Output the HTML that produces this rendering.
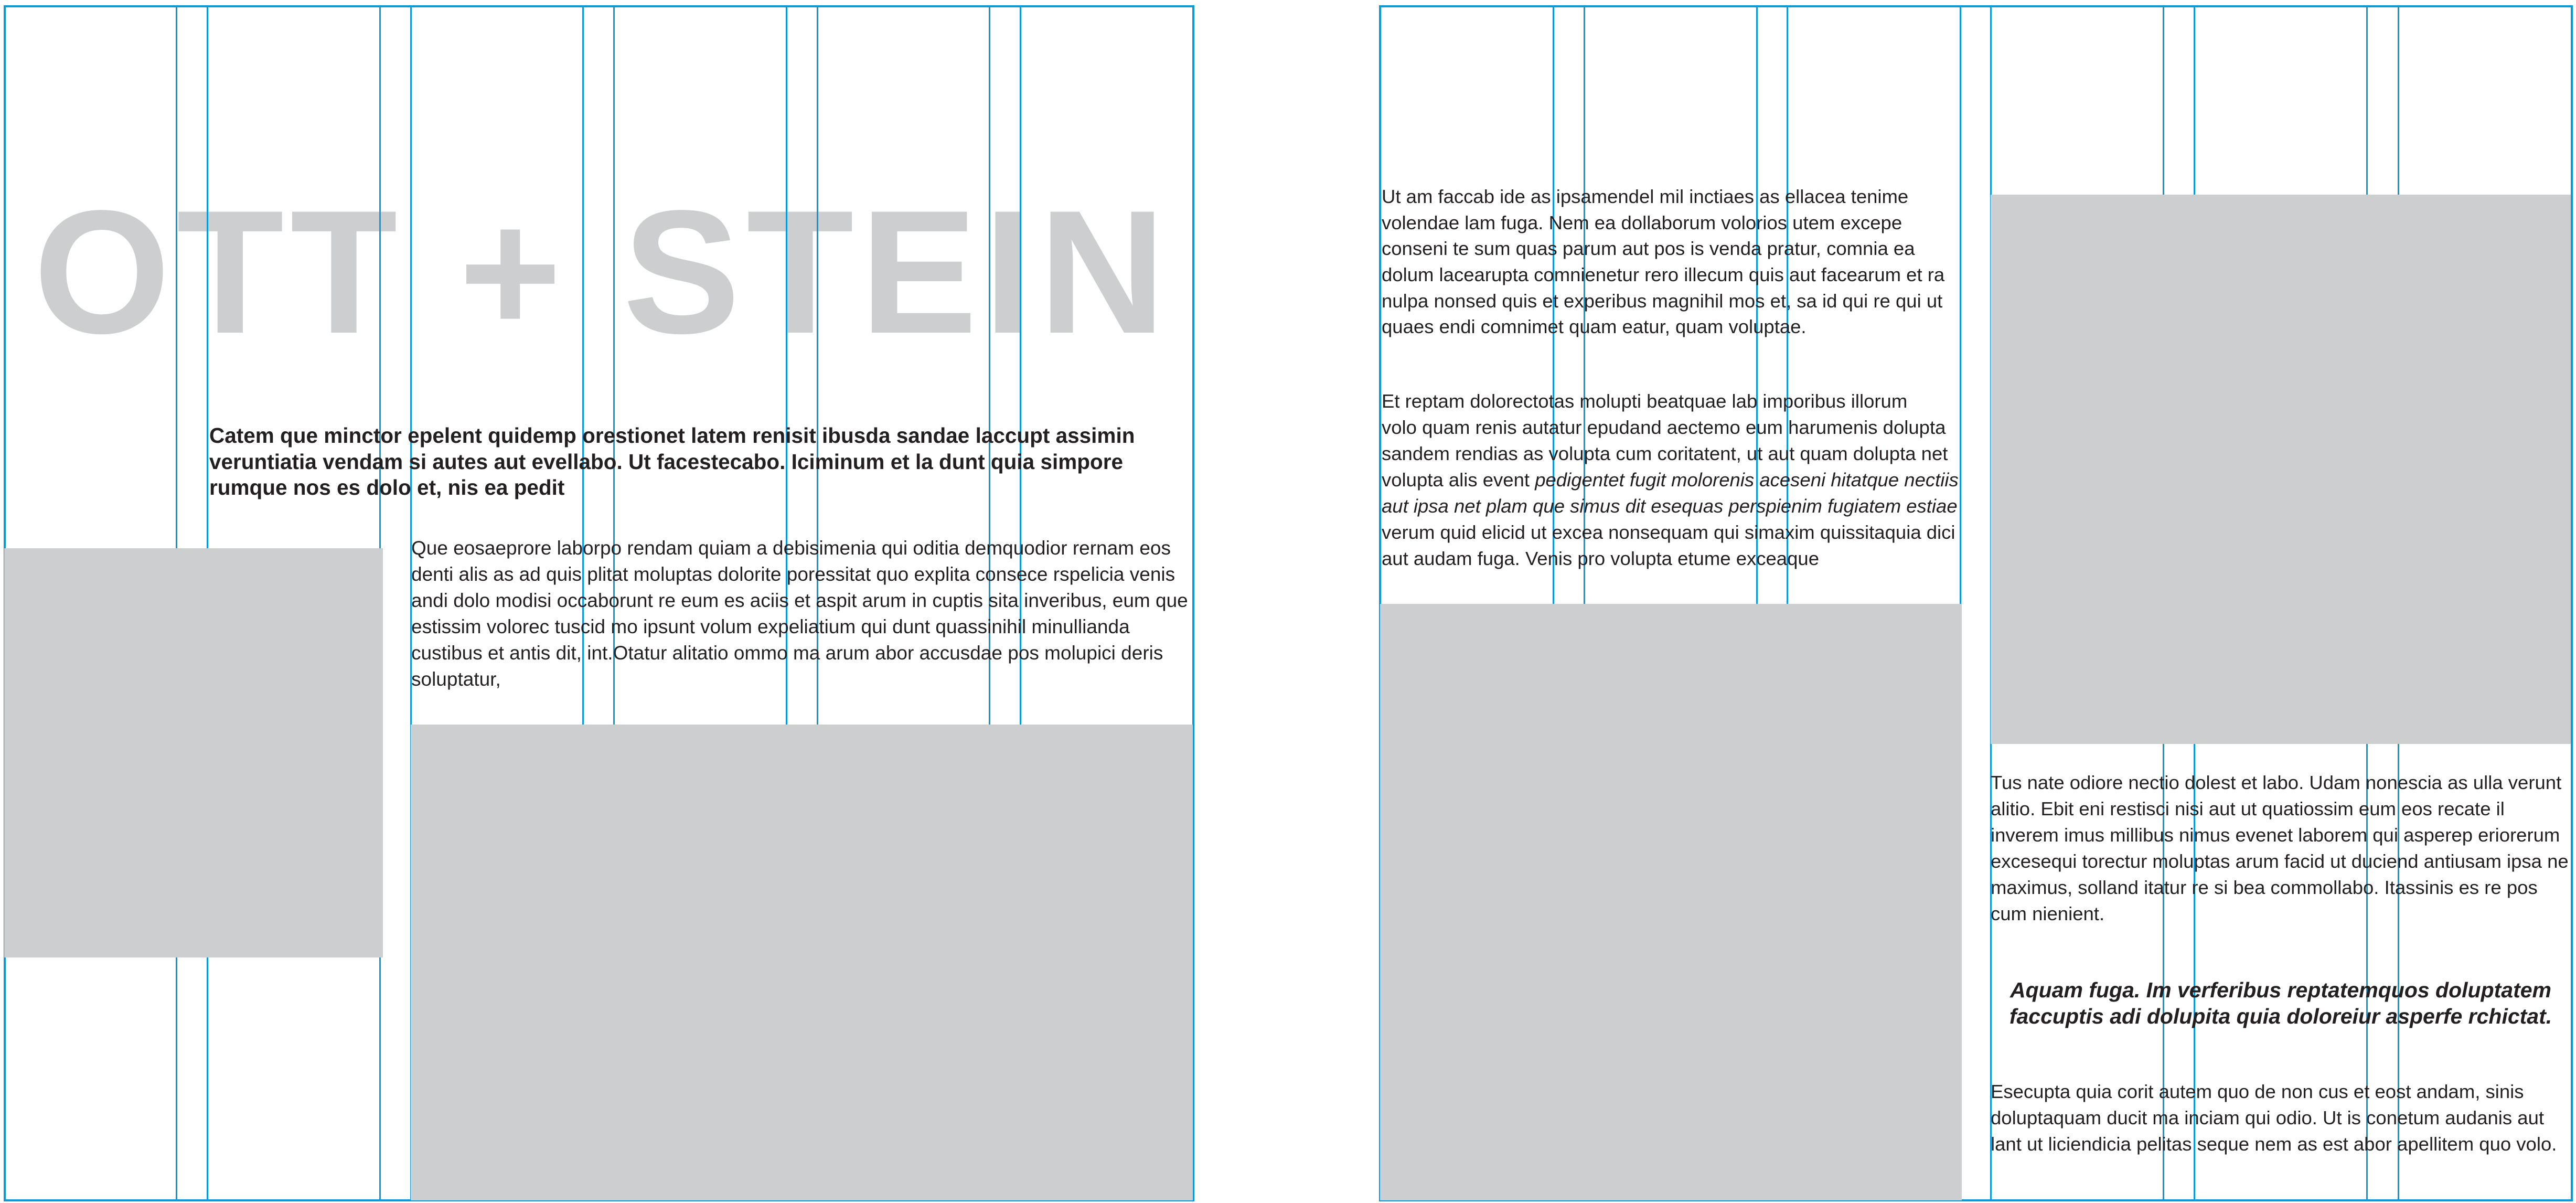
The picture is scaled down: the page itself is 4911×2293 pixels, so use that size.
<!DOCTYPE html>
<html><head><meta charset="utf-8">
<style>
html,body{margin:0;padding:0;background:#fff;}
body{width:4911px;height:2293px;position:relative;overflow:hidden;font-family:"Liberation Sans",sans-serif;color:#231f20;}
.frame{position:absolute;border:4px solid #0a9ad9;box-sizing:border-box;z-index:2;}
.v{position:absolute;width:3px;background:#0a9ad9;z-index:2;}
.g{position:absolute;background:#cdcecf;z-index:3;}
.t{position:absolute;z-index:4;white-space:nowrap;height:50px;line-height:50px;font-size:36.5px;}
.b{font-weight:bold;font-size:40.5px;}
.bi{font-weight:bold;font-style:italic;font-size:41px;}
.lp{font-size:37px;}
.title{position:absolute;z-index:1;left:64px;top:328px;font-weight:bold;font-size:335px;line-height:380px;color:#cdcecf;letter-spacing:12px;white-space:nowrap;}
</style></head><body>
<div class="title">OTT + STEIN</div>

<div class="frame" style="left:7px;top:10px;width:2270px;height:2280px;"></div>
<div class="frame" style="left:2629px;top:10px;width:2276px;height:2280px;"></div>

<div class="v" style="left:335px;top:12px;height:2276px"></div>
<div class="v" style="left:394px;top:12px;height:2276px"></div>
<div class="v" style="left:723px;top:12px;height:2276px"></div>
<div class="v" style="left:782px;top:12px;height:2276px"></div>
<div class="v" style="left:1110px;top:12px;height:2276px"></div>
<div class="v" style="left:1169px;top:12px;height:2276px"></div>
<div class="v" style="left:1498px;top:12px;height:2276px"></div>
<div class="v" style="left:1557px;top:12px;height:2276px"></div>
<div class="v" style="left:1885px;top:12px;height:2276px"></div>
<div class="v" style="left:1944px;top:12px;height:2276px"></div>

<div class="v" style="left:2960px;top:12px;height:2276px"></div>
<div class="v" style="left:3019px;top:12px;height:2276px"></div>
<div class="v" style="left:3348px;top:12px;height:2276px"></div>
<div class="v" style="left:3406px;top:12px;height:2276px"></div>
<div class="v" style="left:3736px;top:12px;height:2276px"></div>
<div class="v" style="left:3794px;top:12px;height:2276px"></div>
<div class="v" style="left:4123px;top:12px;height:2276px"></div>
<div class="v" style="left:4182px;top:12px;height:2276px"></div>
<div class="v" style="left:4511px;top:12px;height:2276px"></div>
<div class="v" style="left:4571px;top:12px;height:2276px"></div>

<div class="g" style="left:8px;top:1045px;width:722px;height:780px"></div>
<div class="g" style="left:783px;top:1381px;width:1491px;height:907px"></div>
<div class="g" style="left:2631px;top:1151px;width:1109px;height:1137px"></div>
<div class="g" style="left:3795px;top:371px;width:1106px;height:1047px"></div>

<div class="t b" style="left:399px;top:805px">Catem que minctor epelent quidemp orestionet latem renisit ibusda sandae laccupt assimin</div>
<div class="t b" style="left:399px;top:855px">veruntiatia vendam si autes aut evellabo. Ut facestecabo. Iciminum et la dunt quia simpore</div>
<div class="t b" style="left:399px;top:904px">rumque nos es dolo et, nis ea pedit</div>

<div class="t lp" style="left:784px;top:1020px">Que eosaeprore laborpo rendam quiam a debisimenia qui oditia demquodior rernam eos</div>
<div class="t lp" style="left:784px;top:1070px">denti alis as ad quis plitat moluptas dolorite poressitat quo explita consece rspelicia venis</div>
<div class="t lp" style="left:784px;top:1120px">andi dolo modisi occaborunt re eum es aciis et aspit arum in cuptis sita inveribus, eum que</div>
<div class="t lp" style="left:784px;top:1170px">estissim volorec tuscid mo ipsunt volum expeliatium qui dunt quassinihil minullianda</div>
<div class="t lp" style="left:784px;top:1220px">custibus et antis dit, int.Otatur alitatio ommo ma arum abor accusdae pos molupici deris</div>
<div class="t lp" style="left:784px;top:1270px">soluptatur,</div>

<div class="t" style="left:2634px;top:350px">Ut am faccab ide as ipsamendel mil inctiaes as ellacea tenime</div>
<div class="t" style="left:2634px;top:400px">volendae lam fuga. Nem ea dollaborum volorios utem excepe</div>
<div class="t" style="left:2634px;top:449px">conseni te sum quas parum aut pos is venda pratur, comnia ea</div>
<div class="t" style="left:2634px;top:499px">dolum lacearupta comnienetur rero illecum quis aut facearum et ra</div>
<div class="t" style="left:2634px;top:549px">nulpa nonsed quis et experibus magnihil mos et, sa id qui re qui ut</div>
<div class="t" style="left:2634px;top:598px">quaes endi comnimet quam eatur, quam voluptae.</div>

<div class="t" style="left:2634px;top:740px">Et reptam dolorectotas molupti beatquae lab imporibus illorum</div>
<div class="t" style="left:2634px;top:790px">volo quam renis autatur epudand aectemo eum harumenis dolupta</div>
<div class="t" style="left:2634px;top:840px">sandem rendias as volupta cum coritatent, ut aut quam dolupta net</div>
<div class="t" style="left:2634px;top:890px">volupta alis event <i>pedigentet fugit molorenis aceseni hitatque nectiis</i></div>
<div class="t" style="left:2634px;top:940px"><i>aut ipsa net plam que simus dit esequas perspienim fugiatem estiae</i></div>
<div class="t" style="left:2634px;top:990px">verum quid elicid ut excea nonsequam qui simaxim quissitaquia dici</div>
<div class="t" style="left:2634px;top:1040px">aut audam fuga. Venis pro volupta etume exceaque</div>

<div class="t" style="left:3795px;top:1467px">Tus nate odiore nectio dolest et labo. Udam nonescia as ulla verunt</div>
<div class="t" style="left:3795px;top:1517px">alitio. Ebit eni restisci nisi aut ut quatiossim eum eos recate il</div>
<div class="t" style="left:3795px;top:1567px">inverem imus millibus nimus evenet laborem qui asperep eriorerum</div>
<div class="t" style="left:3795px;top:1617px">excesequi torectur moluptas arum facid ut duciend antiusam ipsa ne</div>
<div class="t" style="left:3795px;top:1667px">maximus, solland itatur re si bea commollabo. Itassinis es re pos</div>
<div class="t" style="left:3795px;top:1717px">cum nienient.</div>

<div class="t bi" style="left:3795px;width:1106px;text-align:center;top:1862px">Aquam fuga. Im verferibus reptatemquos doluptatem</div>
<div class="t bi" style="left:3795px;width:1106px;text-align:center;top:1912px">faccuptis adi dolupita quia doloreiur asperfe rchictat.</div>

<div class="t" style="left:3795px;top:2056px">Esecupta quia corit autem quo de non cus et eost andam, sinis</div>
<div class="t" style="left:3795px;top:2106px">doluptaquam ducit ma inciam qui odio. Ut is conetum audanis aut</div>
<div class="t" style="left:3795px;top:2156px">lant ut liciendicia pelitas seque nem as est abor apellitem quo volo.</div>
</body></html>
